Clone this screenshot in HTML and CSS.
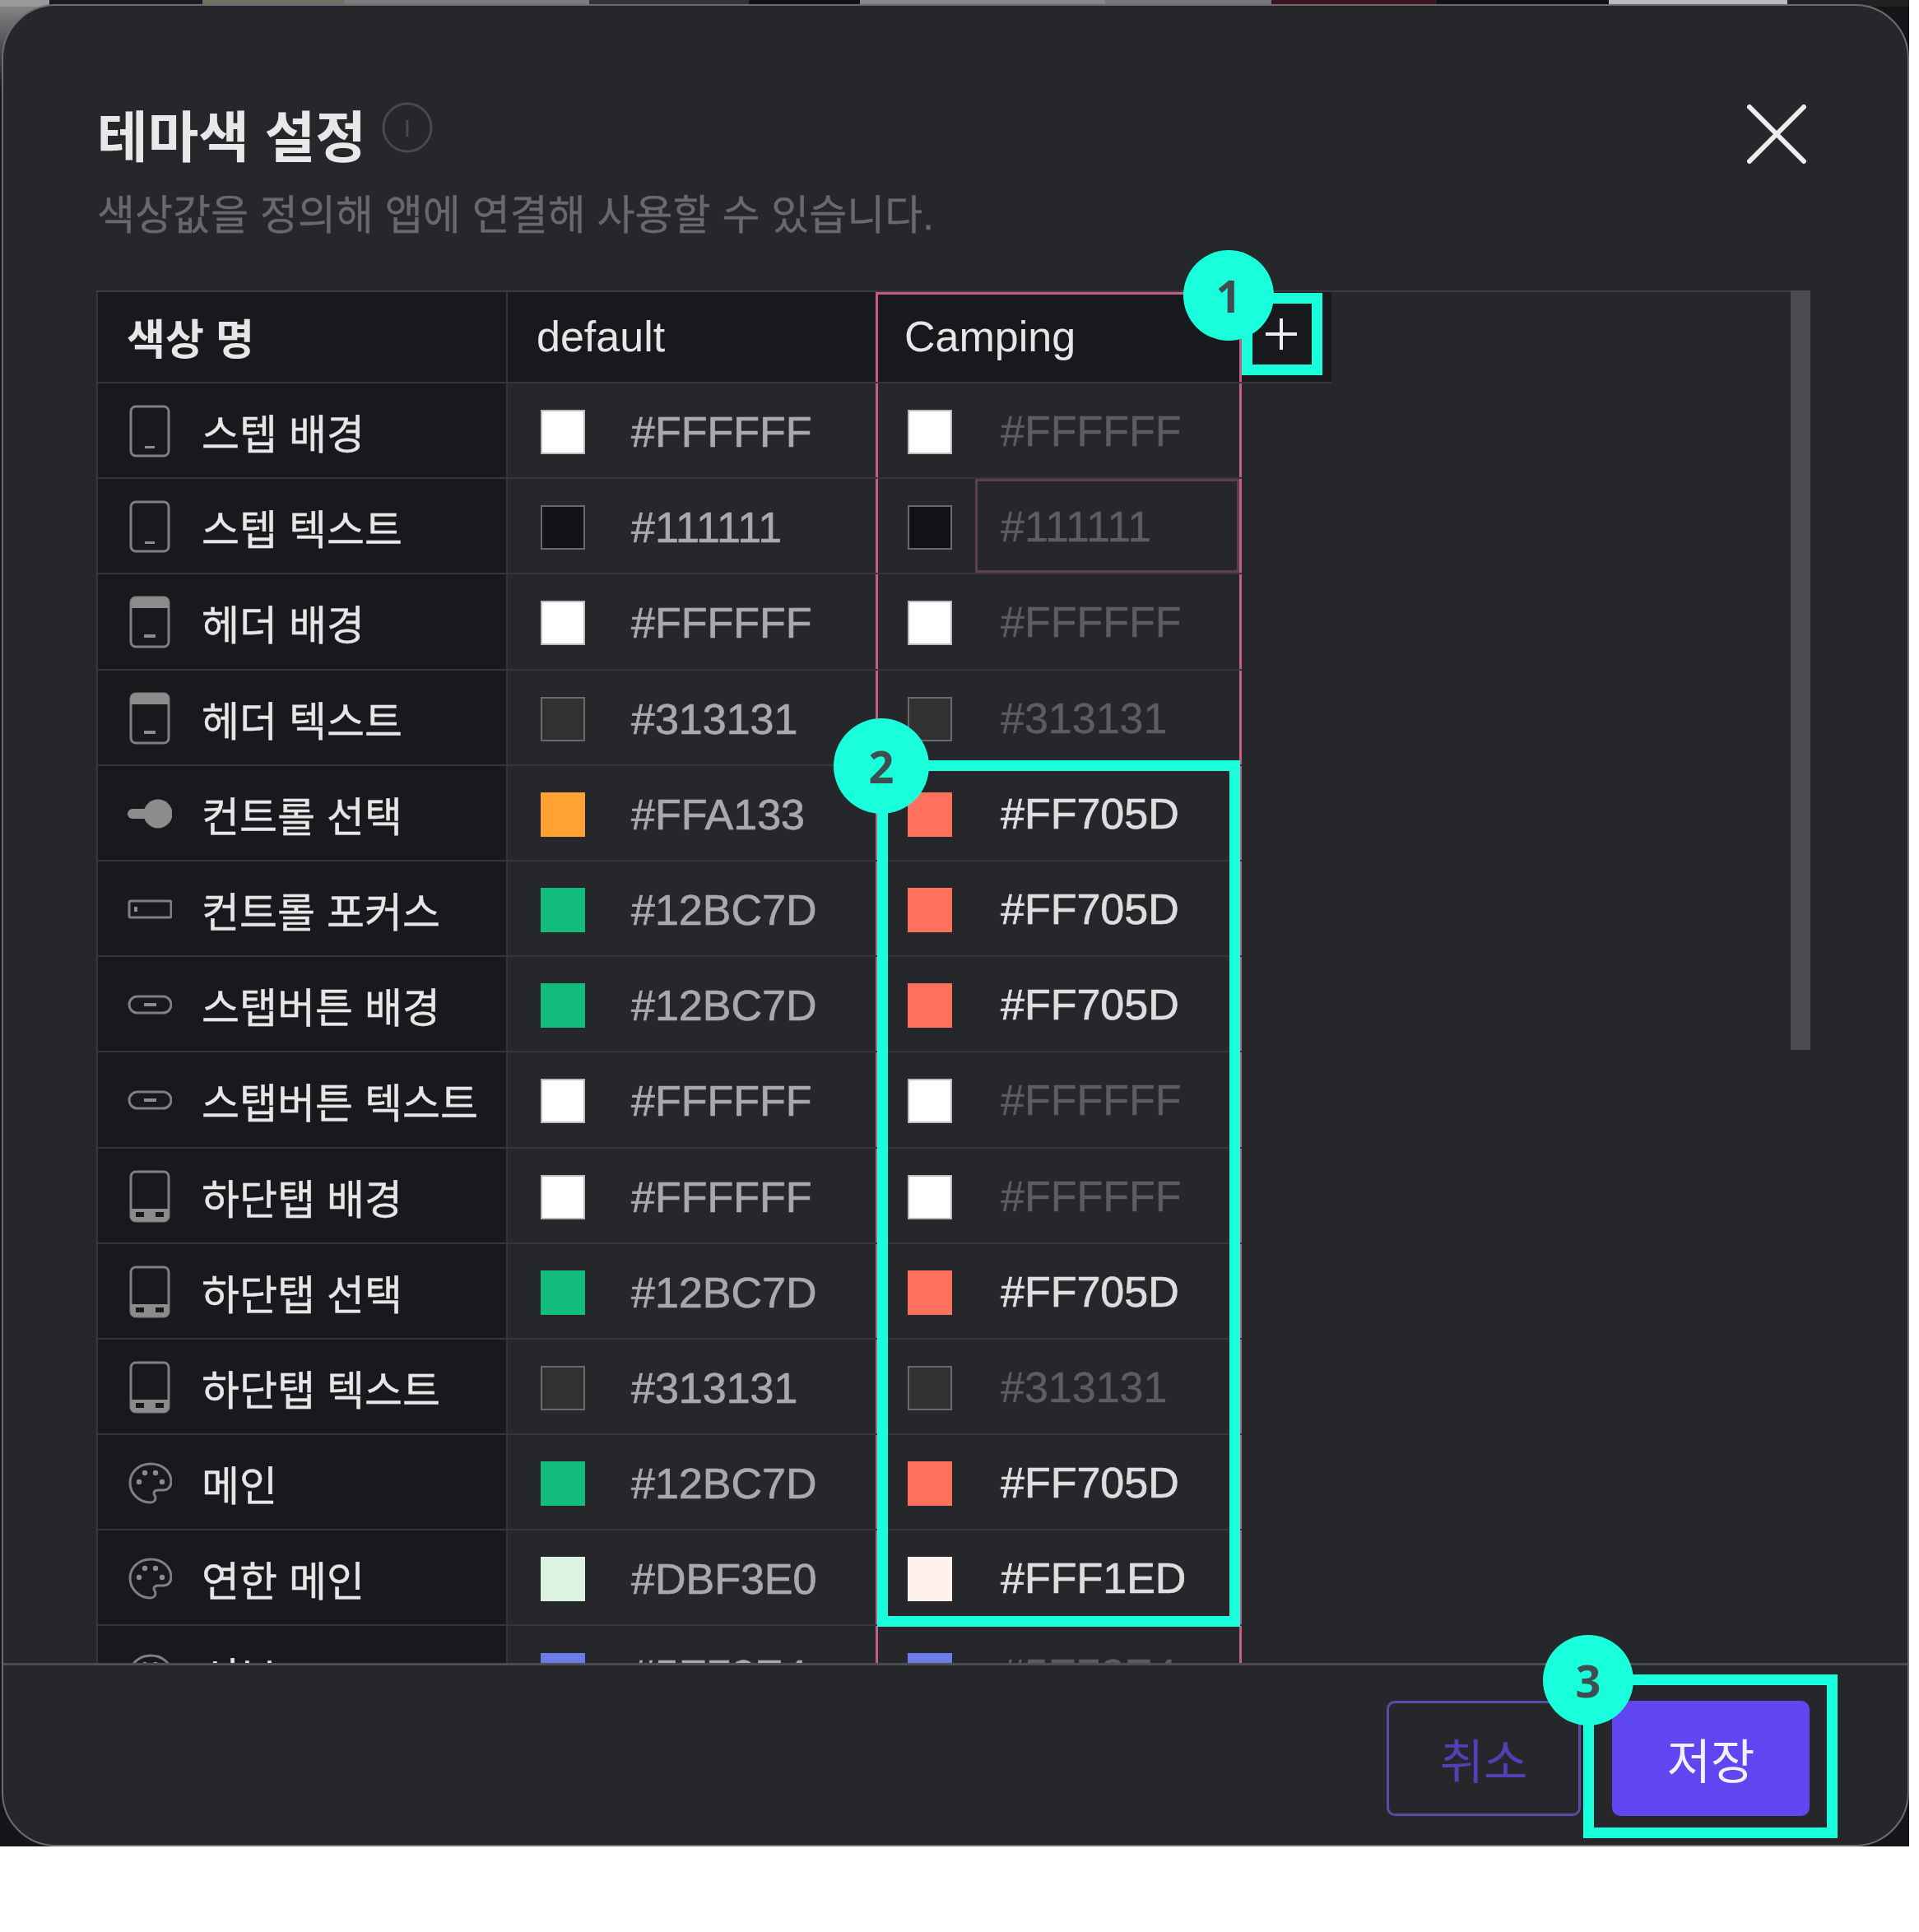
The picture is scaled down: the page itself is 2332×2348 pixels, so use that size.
FILE: index.html
```html
<!DOCTYPE html>
<html lang="ko">
<head>
    <meta charset="UTF-8">
    <title>테마색 설정</title>
    <link rel="stylesheet" href="styles.css">
</head>
<body>
    <svg class="icon-defs" width="0" height="0">
        <symbol id="i-phone" viewBox="0 0 54 64">
            <rect x="4" y="2" width="46" height="60" rx="6" class="line"/>
            <rect x="21" y="50" width="12" height="3" class="solid"/>
        </symbol>
        <symbol id="i-phone-head" viewBox="0 0 54 64">
            <rect x="4" y="2" width="46" height="60" rx="6" class="line"/>
            <path d="M4 8a6 6 0 0 1 6-6h34a6 6 0 0 1 6 6v7H4z" class="solid"/>
            <rect x="20" y="47" width="14" height="4" class="solid"/>
        </symbol>
        <symbol id="i-phone-tab" viewBox="0 0 54 64">
            <rect x="4" y="2" width="46" height="60" rx="6" class="line"/>
            <path d="M4 47h46v9a6 6 0 0 1-6 6H10a6 6 0 0 1-6-6z" class="solid"/>
            <rect x="10" y="51" width="10" height="6" class="hole"/>
            <rect x="34" y="51" width="10" height="6" class="hole"/>
        </symbol>
        <symbol id="i-knob" viewBox="0 0 54 64">
            <circle cx="37" cy="32" r="17.5" class="solid"/>
            <rect x="0" y="26" width="30" height="12" rx="6" class="solid"/>
        </symbol>
        <symbol id="i-input" viewBox="0 0 54 64">
            <rect x="2" y="22" width="51" height="20" rx="2" class="line"/>
            <rect x="8" y="29" width="4" height="6" class="solid"/>
        </symbol>
        <symbol id="i-button" viewBox="0 0 54 64">
            <rect x="2" y="22" width="51" height="20" rx="10" class="line"/>
            <rect x="20" y="30" width="15" height="4" class="solid"/>
        </symbol>
        <symbol id="i-palette" viewBox="9 0 54 64">
            <path d="M37 9C23 9 12 19 12 32c0 13 11 24 25 24 4 0 6-3 6-6 0-2-2-3-2-5 0-3 3-4 5-4h6c6 0 10-4 10-10C62 18 51 9 37 9z" class="line"/>
            <circle cx="23" cy="31" r="3.200" class="solid"/>
            <circle cx="30" cy="20" r="3.200" class="solid"/>
            <circle cx="43" cy="20" r="3.200" class="solid"/>
            <circle cx="51" cy="31" r="3.200" class="solid"/>
        </symbol>
    </svg>

    <div class="screen">
        <div class="dialog">
            <div class="dialog-head">
                <div>
                    <div class="title-row">
                        <span class="title">테마색 설정</span>
                        <svg class="info" viewBox="0 0 62 62">
                            <circle cx="31" cy="31" r="29"/>
                            <path d="M31 22v20"/>
                        </svg>
                    </div>
                    <div class="subtitle">색상값을 정의해 앱에 연결해 사용할 수 있습니다.</div>
                </div>
                <svg class="close" viewBox="0 0 72 72">
                    <path d="M3 3l66 66M69 3L3 69"/>
                </svg>
            </div>

            <div class="dialog-body">
                <div class="table">
                    <div class="row row-head">
                        <div class="cell name-head">색상 명</div>
                        <div class="cell theme-head">default</div>
                        <div class="cell theme-head camping">Camping</div>
                        <div class="cell add-head">
                            <svg class="plus" viewBox="0 0 38 38"><path d="M19 0v38M0 19h38"/></svg>
                        </div>
                    </div>

                    <div class="row">
                        <div class="cell name"><svg class="icon"><use href="#i-phone"/></svg>스텝 배경</div>
                        <div class="cell color"><span class="swatch c-fff"></span><span class="hex">#FFFFFF</span></div>
                        <div class="cell color camping"><span class="swatch c-fff"></span><span class="hex dim">#FFFFFF</span></div>
                    </div>
                    <div class="row">
                        <div class="cell name"><svg class="icon"><use href="#i-phone"/></svg>스텝 텍스트</div>
                        <div class="cell color"><span class="swatch c-111"></span><span class="hex">#111111</span></div>
                        <div class="cell color camping"><span class="swatch c-111"></span><span class="hex dim focus">#111111</span></div>
                    </div>
                    <div class="row">
                        <div class="cell name"><svg class="icon"><use href="#i-phone-head"/></svg>헤더 배경</div>
                        <div class="cell color"><span class="swatch c-fff"></span><span class="hex">#FFFFFF</span></div>
                        <div class="cell color camping"><span class="swatch c-fff"></span><span class="hex dim">#FFFFFF</span></div>
                    </div>
                    <div class="row">
                        <div class="cell name"><svg class="icon"><use href="#i-phone-head"/></svg>헤더 텍스트</div>
                        <div class="cell color"><span class="swatch c-313"></span><span class="hex">#313131</span></div>
                        <div class="cell color camping"><span class="swatch c-313"></span><span class="hex dim">#313131</span></div>
                    </div>
                    <div class="row">
                        <div class="cell name"><svg class="icon"><use href="#i-knob"/></svg>컨트롤 선택</div>
                        <div class="cell color"><span class="swatch c-orange"></span><span class="hex">#FFA133</span></div>
                        <div class="cell color camping"><span class="swatch c-coral"></span><span class="hex on">#FF705D</span></div>
                    </div>
                    <div class="row">
                        <div class="cell name"><svg class="icon"><use href="#i-input"/></svg>컨트롤 포커스</div>
                        <div class="cell color"><span class="swatch c-green"></span><span class="hex">#12BC7D</span></div>
                        <div class="cell color camping"><span class="swatch c-coral"></span><span class="hex on">#FF705D</span></div>
                    </div>
                    <div class="row">
                        <div class="cell name"><svg class="icon"><use href="#i-button"/></svg>스탭버튼 배경</div>
                        <div class="cell color"><span class="swatch c-green"></span><span class="hex">#12BC7D</span></div>
                        <div class="cell color camping"><span class="swatch c-coral"></span><span class="hex on">#FF705D</span></div>
                    </div>
                    <div class="row">
                        <div class="cell name"><svg class="icon"><use href="#i-button"/></svg>스탭버튼 텍스트</div>
                        <div class="cell color"><span class="swatch c-fff"></span><span class="hex">#FFFFFF</span></div>
                        <div class="cell color camping"><span class="swatch c-fff"></span><span class="hex dim">#FFFFFF</span></div>
                    </div>
                    <div class="row">
                        <div class="cell name"><svg class="icon"><use href="#i-phone-tab"/></svg>하단탭 배경</div>
                        <div class="cell color"><span class="swatch c-fff"></span><span class="hex">#FFFFFF</span></div>
                        <div class="cell color camping"><span class="swatch c-fff"></span><span class="hex dim">#FFFFFF</span></div>
                    </div>
                    <div class="row">
                        <div class="cell name"><svg class="icon"><use href="#i-phone-tab"/></svg>하단탭 선택</div>
                        <div class="cell color"><span class="swatch c-green"></span><span class="hex">#12BC7D</span></div>
                        <div class="cell color camping"><span class="swatch c-coral"></span><span class="hex on">#FF705D</span></div>
                    </div>
                    <div class="row">
                        <div class="cell name"><svg class="icon"><use href="#i-phone-tab"/></svg>하단탭 텍스트</div>
                        <div class="cell color"><span class="swatch c-313"></span><span class="hex">#313131</span></div>
                        <div class="cell color camping"><span class="swatch c-313"></span><span class="hex dim">#313131</span></div>
                    </div>
                    <div class="row">
                        <div class="cell name"><svg class="icon"><use href="#i-palette"/></svg>메인</div>
                        <div class="cell color"><span class="swatch c-green"></span><span class="hex">#12BC7D</span></div>
                        <div class="cell color camping"><span class="swatch c-coral"></span><span class="hex on">#FF705D</span></div>
                    </div>
                    <div class="row">
                        <div class="cell name"><svg class="icon"><use href="#i-palette"/></svg>연한 메인</div>
                        <div class="cell color"><span class="swatch c-mint"></span><span class="hex">#DBF3E0</span></div>
                        <div class="cell color camping"><span class="swatch c-blush"></span><span class="hex on">#FFF1ED</span></div>
                    </div>
                    <div class="row">
                        <div class="cell name"><svg class="icon"><use href="#i-palette"/></svg>서브</div>
                        <div class="cell color"><span class="swatch c-blue"></span><span class="hex">#5E72E4</span></div>
                        <div class="cell color camping"><span class="swatch c-blue"></span><span class="hex dim">#5E72E4</span></div>
                    </div>
                </div>
                <div class="scrollbar"></div>
            </div>

            <div class="dialog-foot">
                <button class="btn btn-cancel">취소</button>
                <button class="btn btn-save">저장</button>
            </div>
        </div>

        <!-- callouts drawn over the screenshot -->
        <div class="mark mark-1"></div>
        <div class="mark mark-2"></div>
        <div class="mark mark-3"></div>
        <div class="badge badge-1">1</div>
        <div class="badge badge-2">2</div>
        <div class="badge badge-3">3</div>
    </div>
</body>
</html>
```

FILE: styles.css
```css
* {
    box-sizing: border-box;
}

body {
    margin: 0;
    background-color: #fff;
    font-family: "Liberation Sans", "Noto Sans CJK KR", sans-serif;
}

.icon-defs {
    position: absolute;
}

.screen {
    position: relative;
    width: 2320px;
    height: 2244px;
    padding: 5px 0 0 2px;
    overflow: hidden;
    background-color: #15151a;
    background-image:
        linear-gradient(to right, #999 0, #999 60px, #1a1a22 60px, #1a1a22 246px, #6f7060 246px, #6f7060 418px, #7b7b7b 418px, #7b7b7b 716px, #333 716px, #333 910px, #111 910px, #111 1045px, #888 1045px, #888 1343px, #777 1343px, #777 1545px, #3a1620 1545px, #3a1620 1746px, #111 1746px, #111 1955px, #bbb 1955px, #bbb 2172px, #222 2172px, #222 2320px),
        linear-gradient(to bottom, #8c8c8c, #15151a);
    background-size: 100% 8px, 70px 110px;
    background-repeat: no-repeat;
}

.dialog {
    display: flex;
    flex-direction: column;
    height: 100%;
    border: 2px solid #6c6d70;
    border-radius: 66px;
    overflow: hidden;
    background-color: #26272b;
}

.dialog-head {
    display: flex;
    justify-content: space-between;
    padding: 121px 123px 55.5px 114px;
}

.title-row {
    display: flex;
    align-items: flex-start;
    height: 80px;
}

.title {
    font-size: 67px;
    line-height: 80px;
    font-weight: bold;
    color: #e8e8e8;
}

.info {
    width: 62px;
    height: 62px;
    margin: -4px 0 0 19px;
    fill: none;
    stroke: #48494d;
    stroke-width: 3;
}

.subtitle {
    margin-top: 19px;
    font-size: 50px;
    line-height: 70px;
    color: #68696c;
    -webkit-text-stroke: 0.3px currentColor;
}

.close {
    width: 72px;
    height: 72px;
    margin-top: -1px;
    fill: none;
    stroke: #eee;
    stroke-width: 6;
    stroke-linecap: round;
}

.dialog-body {
    display: flex;
    flex: 1;
    min-height: 0;
    overflow: hidden;
    padding-left: 113px;
}

.table {
    width: 2059px;
    border-top: 2px solid #3a3b3f;
}

.row {
    display: grid;
    grid-template-columns: 500px 447px 445px;
    height: 116.2px;
}

.row-head {
    grid-template-columns: 500px 447px 445px 109px;
    height: 111.5px;
}

.cell {
    display: flex;
    align-items: center;
    border-bottom: 2px solid #35363a;
}

.row-head .cell {
    background-color: #18191d;
    font-size: 52px;
    color: #e6e6e6;
}

.name-head {
    padding-left: 35px;
    border-left: 2px solid #35363a;
    border-right: 2px solid #35363a;
}

.row-head .name-head {
    font-size: 51px;
    font-weight: bold;
}

.theme-head {
    padding-left: 35px;
}

.add-head {
    padding: 0 0 6px 29px;
}

.plus {
    width: 38px;
    height: 38px;
    fill: none;
    stroke: #eee;
    stroke-width: 4;
}

.name {
    padding: 2px 0 0 36px;
    background-color: #18191d;
    border-left: 2px solid #35363a;
    border-right: 2px solid #35363a;
    font-size: 50px;
    color: #e6e6e6;
    -webkit-text-stroke: 0.4px currentColor;
}

.icon {
    flex: none;
    width: 54px;
    height: 64px;
    margin-right: 36px;
}

.line {
    fill: none;
    stroke: #808080;
    stroke-width: 3;
}

.solid {
    fill: #8c8c8c;
}

.hole {
    fill: #18191d;
}

.color {
    padding: 4px 0 0 40px;
}

.camping {
    box-shadow: inset 3px 0 #c45e86, inset -3px 0 #c45e86;
}

.theme-head.camping {
    padding-left: 35px;
    box-shadow: inset 3px 0 #c45e86, inset -3px 0 #c45e86, inset 0 3px #c45e86;
}

.color.camping {
    padding: 4px 3px 0 39px;
}

.swatch {
    flex: none;
    width: 54px;
    height: 54px;
    border: 2px solid #6a6a6a;
}

.hex {
    margin-left: 56px;
    font-size: 52px;
    color: #a9a9ab;
    -webkit-text-stroke: 0.7px currentColor;
}

.camping .hex {
    display: flex;
    flex: 1;
    align-items: center;
    align-self: stretch;
    margin: -4px 0 0 28px;
    padding: 2px 0 0 28px;
    border: 3px solid transparent;
}

.camping .hex.dim {
    color: #5c5d60;
    -webkit-text-stroke: 0.4px currentColor;
}

.camping .hex.on {
    color: #dedede;
}

.camping .hex.focus {
    border-color: #5e3f52;
}

.c-fff { background-color: #fff; border-color: #bbb; }
.c-111 { background-color: #111116; }
.c-313 { background-color: #313131; }
.c-orange { background-color: #ffa133; border-color: #ffa133; }
.c-green { background-color: #12bc7d; border-color: #12bc7d; }
.c-coral { background-color: #ff705d; border-color: #ff705d; }
.c-mint { background-color: #dbf3e0; border-color: #dbf3e0; }
.c-blush { background-color: #fff1ed; border-color: #fff1ed; }
.c-blue { background-color: #6b7ce8; border-color: #6b7ce8; }

.scrollbar {
    flex: none;
    width: 24px;
    height: 923px;
    background-color: #4a4b4e;
}

.dialog-foot {
    display: flex;
    flex: none;
    justify-content: flex-end;
    gap: 38px;
    height: 221px;
    padding: 43px 119px 0 0;
    border-top: 3px solid #4c4d50;
}

.btn {
    height: 140px;
    border-radius: 10px;
    font-family: inherit;
    font-size: 58px;
}

.btn-cancel {
    width: 236px;
    border: 3px solid #5a4ba8;
    background-color: transparent;
    color: #5240b8;
}

.btn-save {
    width: 240px;
    border: none;
    background-color: #5f46f0;
    color: #f2f0ff;
}

.mark {
    position: absolute;
    border: 13px solid #1affdb;
}

.mark-1 {
    left: 1509px;
    top: 356px;
    width: 98px;
    height: 100px;
}

.mark-2 {
    left: 1066px;
    top: 924px;
    width: 441px;
    height: 1053px;
}

.mark-3 {
    left: 1924px;
    top: 2035px;
    width: 309px;
    height: 199px;
}

.badge {
    position: absolute;
    display: flex;
    align-items: center;
    justify-content: center;
    border-radius: 50%;
    background-color: #1affdb;
    font-family: "Open Sans", sans-serif;
    font-size: 54px;
    font-weight: bold;
    color: #3f4f4f;
}

.badge-1 {
    left: 1438px;
    top: 304px;
    width: 110px;
    height: 110px;
}

.badge-2 {
    left: 1013px;
    top: 873px;
    width: 116px;
    height: 116px;
}

.badge-3 {
    left: 1875px;
    top: 1987px;
    width: 110px;
    height: 110px;
}
```
